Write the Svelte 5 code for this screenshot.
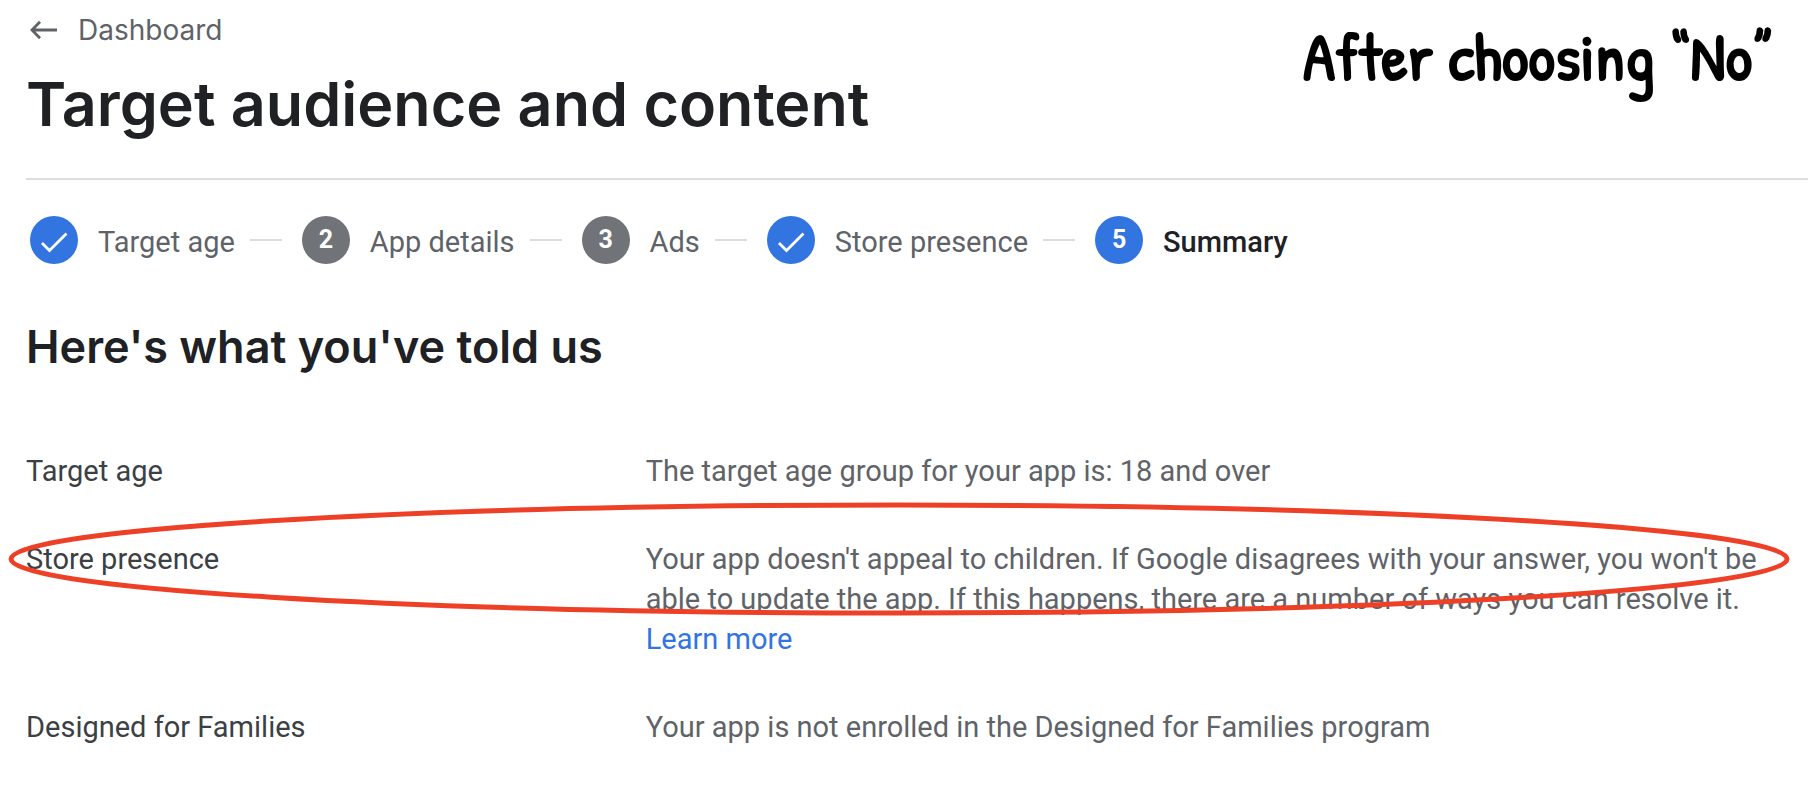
<script>
  const steps = [
    { number: 1, label: 'Target age', state: 'done' },
    { number: 2, label: 'App details', state: 'todo' },
    { number: 3, label: 'Ads', state: 'todo' },
    { number: 4, label: 'Store presence', state: 'done' },
    { number: 5, label: 'Summary', state: 'current' }
  ];

  const answers = [
    { term: 'Target age', text: 'The target age group for your app is: 18 and over' },
    {
      term: 'Store presence',
      text: "Your app doesn't appeal to children. If Google disagrees with your answer, you won't be able to update the app. If this happens, there are a number of ways you can resolve it.",
      link: 'Learn more',
      circled: true
    },
    { term: 'Designed for Families', text: 'Your app is not enrolled in the Designed for Families program' }
  ];
</script>

<main>
  <header>
    <div>
      <a class="back" href="#dashboard">
        <svg width="28" height="20" viewBox="0 0 28 20" aria-hidden="true">
          <path d="M27 10H2.500M10 1.800L2 10l8 8.200" fill="none" stroke="currentColor" stroke-width="2.800" />
        </svg>
        Dashboard
      </a>
      <h1>Target audience and content</h1>
    </div>
    <p class="note">After choosing “No”</p>
  </header>

  <ol class="steps">
    {#each steps as step}
      <li class={step.state} aria-current={step.state === 'current' ? 'step' : undefined}>
        <span class="badge">
          {#if step.state === 'done'}
            <svg width="48" height="48" viewBox="0 0 48 48" aria-hidden="true">
              <path d="M12 27l7.500 7.500L36.500 17.500" fill="none" stroke="currentColor" stroke-width="2.800" />
            </svg>
          {:else}
            {step.number}
          {/if}
        </span>
        <span class="label">{step.label}</span>
      </li>
    {/each}
  </ol>

  <h2>Here's what you've told us</h2>

  <dl>
    {#each answers as row}
      <div class="row">
        <dt>{row.term}</dt>
        <dd>
          {row.text}
          {#if row.link}<a class="more" href="#learn-more">{row.link}</a>{/if}
        </dd>
        {#if row.circled}
          <svg class="ring" viewBox="0 0 1780 114" preserveAspectRatio="none" aria-hidden="true">
            <ellipse cx="890" cy="57" rx="887" ry="54" />
          </svg>
        {/if}
      </div>
    {/each}
  </dl>
</main>

<style>
  :global(body) {
    margin: 0;
    background: #fff;
  }

  main {
    padding: 10px 0 48px 26px;
    overflow-x: hidden;
    color: #5f6368;
    font: 400 29px/40px Roboto, sans-serif;
  }

  header {
    display: flex;
    justify-content: space-between;
    padding-right: 36px;
    padding-bottom: 34px;
    border-bottom: 2px solid #dadce0;
  }

  .back {
    display: flex;
    align-items: center;
    gap: 20px;
    width: fit-content;
    padding-left: 4px;
    color: #5f6368;
    font-family: Inter, sans-serif;
    font-size: 28px;
    text-decoration: none;
  }

  h1,
  h2 {
    margin: 0;
    color: #202124;
    font-family: Inter, sans-serif;
    font-weight: 600;
  }

  h1 {
    margin-top: 14px;
    font-size: 61px;
    line-height: 80px;
  }

  h2 {
    margin-top: 51px;
    font-size: 45px;
    line-height: 64px;
  }

  .note {
    margin: 14px 0 0;
    color: #000;
    font-family: "Patrick Hand", "Comic Neue", "Liberation Sans Narrow", sans-serif;
    font-size: 66px;
    font-weight: 700;
    line-height: 64px;
    white-space: nowrap;
  }

  .steps {
    display: flex;
    flex-wrap: wrap;
    margin: 36px 0 0;
    padding: 0 0 0 4px;
    list-style: none;
  }

  li {
    display: flex;
    align-items: center;
  }

  li:not(:last-child)::after {
    width: 32px;
    height: 2px;
    margin: 0 20px 0 15px;
    background: #dadce0;
    content: "";
  }

  .badge {
    display: grid;
    place-items: center;
    width: 48px;
    height: 48px;
    margin-right: 20px;
    border-radius: 50%;
    background: #3274e0;
    color: #fff;
    font-size: 25px;
    font-weight: 700;
  }

  .todo .badge {
    background: #707478;
  }

  .label {
    padding-top: 4px;
  }

  .current .label {
    color: #202124;
    font-weight: 500;
  }

  dl {
    display: grid;
    gap: 48px;
    margin: 72px 0 0;
  }

  .row {
    position: relative;
    display: grid;
    grid-template-columns: 6fr 11fr;
    padding-right: 26px;
  }

  dt {
    color: #3c4043;
  }

  dd {
    margin: 0;
  }

  .more {
    display: inline-block;
    color: #3274e0;
    text-decoration: none;
  }

  .ring {
    position: absolute;
    top: -37px;
    left: -18px;
    width: 100%;
    height: 114px;
    pointer-events: none;
  }

  .ring ellipse {
    fill: none;
    stroke: #ee4026;
    stroke-width: 5px;
    vector-effect: non-scaling-stroke;
  }
</style>
